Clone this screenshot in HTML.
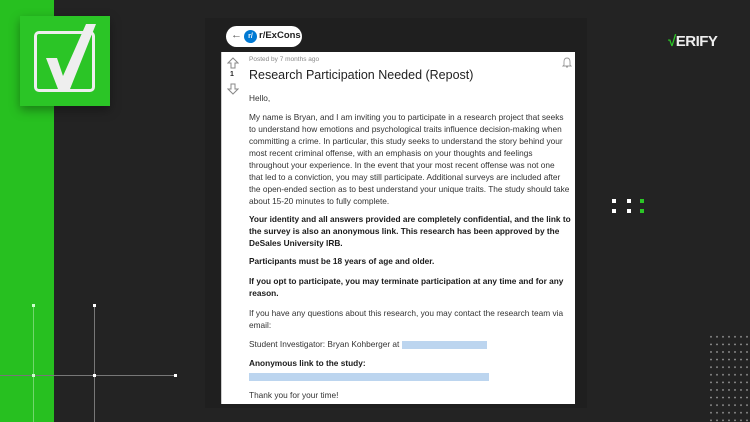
<!DOCTYPE html>
<html><head><style>
*{margin:0;padding:0;box-sizing:border-box}
body{width:750px;height:422px;background:#232323;position:relative;overflow:hidden;font-family:"Liberation Sans",sans-serif}
.abs{position:absolute}
.card{left:221px;top:52px;width:354px;height:352px;background:#fff;border-left:1px solid #ccc}
.p{position:absolute;left:27px;font-size:8.3px;line-height:12.2px;color:#333;white-space:nowrap}
b{color:#1a1a1a}
.blur{display:inline-block;height:8px;background:#bcd5ef;vertical-align:middle}
</style></head><body>
<div class="abs" style="left:0;top:0;width:54px;height:422px;background:#27c020"></div>
<div class="abs" style="left:205px;top:18px;width:382px;height:390px;background:#1f1f1f"></div>
<div class="abs" style="left:20px;top:16px;width:90px;height:90px;background:#2bc526;box-shadow:0 4px 10px rgba(0,0,0,.35)"></div>
<div class="abs" style="left:34px;top:31px;width:61px;height:61px;border:3px solid #eee;border-radius:5px"></div>
<svg class="abs" style="left:20px;top:16px" width="90" height="90"><path d="M26 42 L37 42 L43 60 L66 8 L76 8 L50 73 L38 73 Z" fill="#eee"/></svg>
<div class="abs" style="left:33px;top:305px;width:1px;height:117px;background:rgba(255,255,255,.35)"></div>
<div class="abs" style="left:94px;top:305px;width:1px;height:117px;background:#777"></div>
<div class="abs" style="left:0;top:375px;width:175px;height:1px;background:#777"></div>
<div class="abs" style="left:32px;top:304px;width:3px;height:3px;background:#cfc"></div>
<div class="abs" style="left:93px;top:304px;width:3px;height:3px;background:#fff"></div>
<div class="abs" style="left:32px;top:374px;width:3px;height:3px;background:#cfc"></div>
<div class="abs" style="left:93px;top:374px;width:3px;height:3px;background:#fff"></div>
<div class="abs" style="left:174px;top:374px;width:3px;height:3px;background:#fff"></div>
<div class="abs" style="left:226px;top:26px;width:76px;height:21px;background:#fff;border-radius:11px"></div>
<div class="abs" style="left:231px;top:29px;font-size:11px;color:#555">←</div>
<div class="abs" style="left:244px;top:30px;width:13px;height:13px;border-radius:50%;background:#0079d3;color:#fff;font-size:7px;font-weight:bold;text-align:center;line-height:13px">r/</div>
<div class="abs" style="left:259px;top:30px;font-size:9.5px;font-weight:bold;color:#222">r/ExCons</div>
<div class="abs" style="left:668px;top:33px;font-size:15px;font-weight:bold;color:#eee;letter-spacing:-0.5px"><span style="color:#2bc526">√</span>ERIFY</div>
<div class="abs" style="left:612px;top:199px;width:4px;height:4px;background:#fff"></div>
<div class="abs" style="left:627px;top:199px;width:4px;height:4px;background:#fff"></div>
<div class="abs" style="left:640px;top:199px;width:4px;height:4px;background:#2bc526"></div>
<div class="abs" style="left:612px;top:209px;width:4px;height:4px;background:#fff"></div>
<div class="abs" style="left:627px;top:209px;width:4px;height:4px;background:#fff"></div>
<div class="abs" style="left:640px;top:209px;width:4px;height:4px;background:#2bc526"></div>
<div class="abs" style="left:708px;top:333px;width:42px;height:89px;background-image:radial-gradient(circle,#888 0.8px,transparent 1px);background-size:6px 7.6px"></div>
<div class="abs card">
<svg class="abs" style="left:5px;top:5px" width="12" height="12"><path d="M6 1 L11 6 L8 6 L8 11 L4 11 L4 6 L1 6 Z" fill="none" stroke="#888" stroke-width="1"/></svg>
<div class="abs" style="left:8px;top:19px;font-size:7px;font-weight:bold;color:#222">1</div>
<svg class="abs" style="left:5px;top:31px" width="12" height="12"><path d="M6 11 L11 6 L8 6 L8 1 L4 1 L4 6 L1 6 Z" fill="none" stroke="#888" stroke-width="1"/></svg>
<svg class="abs" style="left:340px;top:5px" width="10" height="11"><path d="M2 8 L2 5 Q2 1 5 1 Q8 1 8 5 L8 8 L9 9 L1 9 Z M4 10 L6 10" fill="none" stroke="#999" stroke-width="0.9"/></svg>
<div class="abs" style="left:27px;top:4px;font-size:6.5px;color:#888">Posted by 7 months ago</div>
<div class="abs" style="left:27px;top:16px;font-size:12.5px;color:#222">Research Participation Needed (Repost)</div>
<div class="p" style="top:40px">Hello,</div>
<div class="p" style="top:59px;line-height:12px">My name is Bryan, and I am inviting you to participate in a research project that seeks<br>to understand how emotions and psychological traits influence decision-making when<br>committing a crime. In particular, this study seeks to understand the story behind your<br>most recent criminal offense, with an emphasis on your thoughts and feelings<br>throughout your experience. In the event that your most recent offense was not one<br>that led to a conviction, you may still participate. Additional surveys are included after<br>the open-ended section as to best understand your unique traits. The study should take<br>about 15-20 minutes to fully complete.</div>
<div class="p" style="top:161px"><b>Your identity and all answers provided are completely confidential, and the link to<br>the survey is also an anonymous link. This research has been approved by the<br>DeSales University IRB.</b></div>
<div class="p" style="top:203px"><b>Participants must be 18 years of age and older.</b></div>
<div class="p" style="top:223px"><b>If you opt to participate, you may terminate participation at any time and for any<br>reason.</b></div>
<div class="p" style="top:255px">If you have any questions about this research, you may contact the research team via<br>email:</div>
<div class="p" style="top:286px">Student Investigator: Bryan Kohberger at <span class="blur" style="width:85px"></span></div>
<div class="p" style="top:305px"><b>Anonymous link to the study:</b></div>
<div class="abs" style="left:27px;top:321px;width:240px;height:8px;background:#bcd5ef"></div>
<div class="p" style="top:337px">Thank you for your time!</div>
</div>
</body></html>
